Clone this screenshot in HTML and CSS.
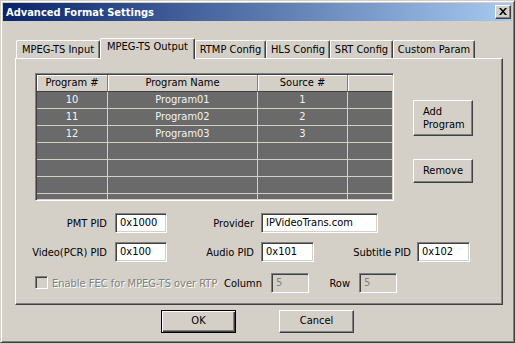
FILE: index.html
```html
<!DOCTYPE html>
<html>
<head>
<meta charset="utf-8">
<title>Advanced Format Settings</title>
<link rel="stylesheet" href="styles.css">
</head>
<body>
<div class="window">
  <div class="titlebar">
    <span class="title">Advanced Format Settings</span>
    <div class="close"><svg width="8" height="7" viewBox="0 0 8 7"><path d="M0 0H2L8 7H6Z M6 0H8L2 7H0Z" fill="#000"/></svg></div>
  </div>
  <div class="client">
    <div class="tabs">
      <div class="tab tab-input">MPEG-TS Input</div>
      <div class="tab tab-output sel">MPEG-TS Output</div>
      <div class="tab tab-rtmp">RTMP Config</div>
      <div class="tab tab-hls">HLS Config</div>
      <div class="tab tab-srt">SRT Config</div>
      <div class="tab tab-custom">Custom Param</div>
    </div>
    <div class="panel">
      <div class="list-area">
        <div class="grid">
          <div class="grid-inner">
            <div class="hcell">Program #</div><div class="hcell">Program Name</div><div class="hcell">Source #</div><div class="hcell last"></div>
            <div class="cell">10</div><div class="cell">Program01</div><div class="cell">1</div><div class="cell last"></div>
            <div class="cell">11</div><div class="cell">Program02</div><div class="cell">2</div><div class="cell last"></div>
            <div class="cell">12</div><div class="cell">Program03</div><div class="cell">3</div><div class="cell last"></div>
            <div class="cell"></div><div class="cell"></div><div class="cell"></div><div class="cell last"></div>
            <div class="cell"></div><div class="cell"></div><div class="cell"></div><div class="cell last"></div>
            <div class="cell"></div><div class="cell"></div><div class="cell"></div><div class="cell last"></div>
            <div class="cell"></div><div class="cell"></div><div class="cell"></div><div class="cell last"></div>
          </div>
        </div>
        <div class="side">
          <div class="btn btn-add">Add<br>Program</div>
          <div class="btn btn-remove">Remove</div>
        </div>
      </div>
      <div class="form-row r1">
        <div class="lbl l1">PMT PID</div><div class="field f-short">0x1000</div>
        <div class="lbl l2">Provider</div><div class="field f-long">IPVideoTrans.com</div>
      </div>
      <div class="form-row r2">
        <div class="lbl l1">Video(PCR) PID</div><div class="field f-short">0x100</div>
        <div class="lbl l2">Audio PID</div><div class="field f-mid">0x101</div>
        <div class="lbl l3">Subtitle PID</div><div class="field f-mid">0x102</div>
      </div>
      <div class="form-row r3">
        <div class="check"></div>
        <div class="lbl-disabled">Enable FEC for MPEG-TS over RTP</div>
        <div class="lbl l4">Column</div><div class="field f-tiny disabled">5</div>
        <div class="lbl l4">Row</div><div class="field f-tiny disabled">5</div>
      </div>
    </div>
    <div class="footer">
      <div class="btn btn-foot btn-default">OK</div>
      <div class="btn btn-foot">Cancel</div>
    </div>
  </div>
</div>
</body>
</html>
```
FILE: styles.css
```css
html, body {
  margin: 0;
  padding: 0;
  background: #d4d0c8;
}
body {
  font-family: "DejaVu Sans Condensed", "DejaVu Sans", sans-serif;
  font-stretch: condensed;
  font-size: 11px;
  color: #000;
}
.window {
  width: 515px;
  height: 343px;
  box-sizing: border-box;
  border: 1px solid;
  border-color: #d4d0c8 #404040 #404040 #d4d0c8;
  box-shadow: inset 1px 1px #fff, inset -1px -1px #808080;
  padding: 2px;
  background: #d4d0c8;
  display: flex;
  flex-direction: column;
}
.titlebar {
  height: 18px;
  flex: none;
  display: flex;
  align-items: center;
  padding: 0 1px 0 3px;
  background: linear-gradient(90deg, #0a246a, #a6caf0);
  color: #fff;
  font-weight: bold;
}
.title { flex: 1; }
.close {
  width: 16px;
  height: 14px;
  box-sizing: border-box;
  background: #d4d0c8;
  border: 1px solid;
  border-color: #fff #404040 #404040 #fff;
  box-shadow: inset -1px -1px #808080;
  display: flex;
  align-items: center;
  justify-content: center;
  padding: 0 1px 1px 0;
}
.close svg { display: block; }
.client {
  flex: 1;
  padding-top: 17px;
}
.tabs {
  display: flex;
  align-items: flex-end;
  height: 20px;
  margin-left: 13px;
  position: relative;
  z-index: 1;
}
.tab {
  box-sizing: border-box;
  height: 18px;
  border: 1px solid #fff;
  border-bottom: none;
  border-right-color: #404040;
  box-shadow: inset -1px 0 #808080;
  border-radius: 2px 2px 0 0;
  text-align: center;
  padding-top: 2px;
  line-height: 13px;
  white-space: nowrap;
  background: #d4d0c8;
}
.tab.sel {
  height: 21px;
  margin-bottom: -1px;
  padding-top: 1px;
}
.tab-input { width: 84px; }
.tab-output { width: 95px; }
.tab-rtmp { width: 71px; }
.tab-hls { width: 64px; }
.tab-srt { width: 63px; }
.tab-custom { width: 82px; }
.panel {
  width: 488px;
  height: 247px;
  box-sizing: border-box;
  margin-left: 12px;
  border: 1px solid;
  border-color: #fff #404040 #404040 #fff;
  box-shadow: inset -1px -1px #808080;
}
.list-area {
  display: flex;
  align-items: flex-start;
  margin: 14px 0 0 19px;
}
.grid {
  width: 359px;
  height: 128px;
  box-sizing: border-box;
  border: 1px solid;
  border-color: #808080 #fff #fff #808080;
  box-shadow: inset 1px 1px #404040, inset -1px -1px #d4d0c8;
  padding: 1px;
}
.grid-inner {
  height: 124px;
  overflow: hidden;
  display: grid;
  grid-template-columns: 71px 150px 90px 44px;
  grid-auto-rows: 17px;
}
.hcell {
  box-sizing: border-box;
  background: #d4d0c8;
  box-shadow: inset 1px 1px #fff;
  border-right: 1px solid #808080;
  border-bottom: 1px solid #404040;
  text-align: center;
  line-height: 16px;
}
.hcell.last { border-right: none; }
.cell {
  box-sizing: border-box;
  background: #6a6a6a;
  color: #f4f4f4;
  border-right: 1px solid #d4d0c8;
  border-bottom: 1px solid #d4d0c8;
  text-align: center;
  line-height: 16px;
}
.cell.last { border-right: none; }
.side {
  display: flex;
  flex-direction: column;
  gap: 23px;
  margin-left: 19px;
  padding-top: 27px;
}
.btn {
  box-sizing: border-box;
  background: #d4d0c8;
  border: 1px solid;
  border-color: #fff #404040 #404040 #fff;
  box-shadow: inset -1px -1px #808080;
  text-align: center;
}
.btn-add {
  width: 60px;
  height: 36px;
  text-align: left;
  padding: 4px 0 0 9px;
  line-height: 13px;
}
.btn-remove {
  width: 60px;
  height: 24px;
  line-height: 21px;
}
.form-row {
  display: flex;
  align-items: center;
  height: 20px;
}
.r1 { margin-top: 12px; }
.r2 { margin-top: 9px; }
.r3 { margin-top: 11px; padding-left: 19px; }
.lbl {
  flex: none;
  text-align: right;
  white-space: nowrap;
}
.l1 { width: 91px; margin-right: 8px; }
.l2 { width: 87px; margin-right: 7px; }
.l3 { width: 97px; margin-right: 6px; }
.l4 { width: 41px; margin-right: 9px; }
.field {
  flex: none;
  box-sizing: border-box;
  height: 20px;
  border: 1px solid;
  border-color: #808080 #fff #fff #808080;
  box-shadow: inset 1px 1px #404040, inset -1px -1px #d4d0c8;
  background: #fff;
  padding: 0 0 0 4px;
  line-height: 18px;
  white-space: nowrap;
  overflow: hidden;
}
.f-short { width: 52px; }
.f-long { width: 117px; }
.f-mid { width: 53px; }
.f-tiny { width: 38px; }
.field.disabled {
  background: #d4d0c8;
  color: #808080;
}
.check {
  flex: none;
  width: 13px;
  height: 13px;
  box-sizing: border-box;
  border: 1px solid;
  border-color: #808080 #fff #fff #808080;
  box-shadow: inset 1px 1px #404040, inset -1px -1px #d4d0c8;
  background: #d4d0c8;
  margin: 0 4px 2px 0;
}
.lbl-disabled {
  flex: none;
  width: 169px;
  color: #808080;
  text-shadow: 1px 1px #fff;
  white-space: nowrap;
}
.footer {
  display: flex;
  justify-content: center;
  gap: 43px;
  margin-top: 5px;
}
.btn-foot {
  width: 75px;
  height: 23px;
  line-height: 20px;
}
.btn-default {
  border: 1px solid #000;
  box-shadow: inset 1px 1px #fff, inset -1px -1px #404040, inset -2px -2px #808080;
}
```
